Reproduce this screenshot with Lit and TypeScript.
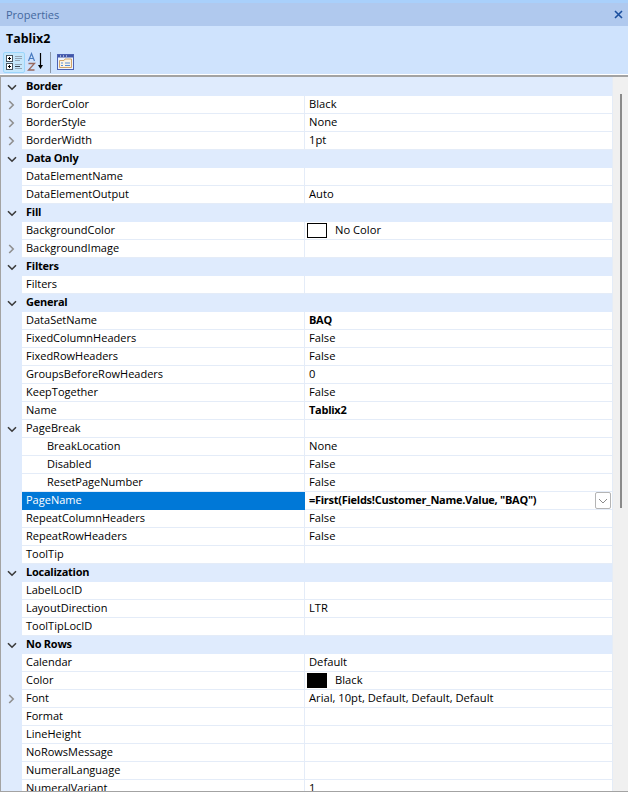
import { LitElement, html, css, svg } from "lit";
import { customElement } from "lit/decorators.js";

type Row = {
  name: string;
  value?: string;
  cat?: boolean;
  bold?: boolean;
  collapsed?: boolean;
  expanded?: boolean;
  sub?: boolean;
  selected?: boolean;
  swatch?: "white" | "black";
};

const ROWS: Row[] = [
  { name: "Border", cat: true },
  { name: "BorderColor", value: "Black", collapsed: true },
  { name: "BorderStyle", value: "None", collapsed: true },
  { name: "BorderWidth", value: "1pt", collapsed: true },
  { name: "Data Only", cat: true },
  { name: "DataElementName" },
  { name: "DataElementOutput", value: "Auto" },
  { name: "Fill", cat: true },
  { name: "BackgroundColor", value: "No Color", swatch: "white" },
  { name: "BackgroundImage", collapsed: true },
  { name: "Filters", cat: true },
  { name: "Filters" },
  { name: "General", cat: true },
  { name: "DataSetName", value: "BAQ", bold: true },
  { name: "FixedColumnHeaders", value: "False" },
  { name: "FixedRowHeaders", value: "False" },
  { name: "GroupsBeforeRowHeaders", value: "0" },
  { name: "KeepTogether", value: "False" },
  { name: "Name", value: "Tablix2", bold: true },
  { name: "PageBreak", expanded: true },
  { name: "BreakLocation", value: "None", sub: true },
  { name: "Disabled", value: "False", sub: true },
  { name: "ResetPageNumber", value: "False", sub: true },
  { name: "PageName", value: '=First(Fields!Customer_Name.Value, "BAQ")', bold: true, selected: true },
  { name: "RepeatColumnHeaders", value: "False" },
  { name: "RepeatRowHeaders", value: "False" },
  { name: "ToolTip" },
  { name: "Localization", cat: true },
  { name: "LabelLocID" },
  { name: "LayoutDirection", value: "LTR" },
  { name: "ToolTipLocID" },
  { name: "No Rows", cat: true },
  { name: "Calendar", value: "Default" },
  { name: "Color", value: "Black", swatch: "black" },
  { name: "Font", value: "Arial, 10pt, Default, Default, Default", collapsed: true },
  { name: "Format" },
  { name: "LineHeight" },
  { name: "NoRowsMessage" },
  { name: "NumeralLanguage" },
  { name: "NumeralVariant", value: "1" },
];

const chevDown = svg`<svg class="chev" width="10" height="7" viewBox="0 0 10 7"><path d="M1 1.2 L5 5.2 L9 1.2" fill="none" stroke="#3a3a3a" stroke-width="1.6"/></svg>`;
const chevRight = svg`<svg class="chev" width="7" height="10" viewBox="0 0 7 10"><path d="M1.2 1 L5.2 5 L1.2 9" fill="none" stroke="#8f8f8f" stroke-width="1.6"/></svg>`;

@customElement("app-root")
export class AppRoot extends LitElement {
  static styles = css`
    :host {
      display: flex;
      flex-direction: column;
      width: 628px;
      height: 792px;
      overflow: hidden;
      background: #cfe3fd;
      font-family: "Open Sans", "Noto Sans", sans-serif;
      font-size: 11px;
      color: #000;
    }
    .strip { height: 3px; background: #a9d0fb; flex: none; }
    .title {
      height: 23px;
      flex: none;
      background: #b0c9ee;
      display: flex;
      align-items: center;
      justify-content: space-between;
      padding: 0 5px 0 6px;
      color: #44689f;
      font-size: 11px;
    }
    .title svg { display: block; }
    .head {
      height: 48px;
      flex: none;
      display: flex;
      flex-direction: column;
    }
    .objname {
      height: 25px;
      padding-left: 6px;
      display: flex;
      align-items: center;
      font-weight: 700;
      font-size: 12.4px;
    }
    .tools {
      display: flex;
      align-items: center;
      height: 22px;
      padding-left: 3px;
    }
    .tool { display: flex; align-items: center; justify-content: center; flex: none; }
    .tool.active {
      width: 22px;
      height: 21px;
      box-sizing: border-box;
      background: #c5e6fb;
      border: 1px solid #9cd6fb;
      border-radius: 2px;
    }
    .tool.az { width: 22px; height: 22px; }
    .tsep { width: 1px; height: 21px; background: #8a97a8; margin: 0 6px 0 3px; flex: none; }
    .white { height: 1px; background: #fff; flex: none; }
    .main {
      height: 714px;
      flex: none;
      display: flex;
      background: #f0f0f0;
      border-top: 2px solid #a3a3a3;
      border-bottom: 2px solid #a3a3a3;
      border-left: 1px solid #a3a3a3;
    }
    .grid {
      width: 611px;
      flex: none;
      overflow: hidden;
      padding-top: 1px;
      background: #dfebfd;
      border-right: 1px solid #e4ecf7;
    }
    .row {
      display: flex;
      height: 18px;
      box-sizing: border-box;
      background: #fff;
      line-height: 15px;
    }
    .gutter {
      width: 21px;
      flex: none;
      background: #dfebfd;
      display: flex;
      align-items: center;
      justify-content: center;
      height: 18px;
    }
    .chev { display: block; }
    .namecell {
      width: 283px;
      flex: none;
      box-sizing: border-box;
      padding-left: 4px;
      border-bottom: 1px solid #e4ecf8;
      border-right: 1px solid #e4ecf8;
      white-space: nowrap;
      overflow: hidden;
    }
    .namecell.sub { padding-left: 25px; }
    .valcell {
      flex: 1;
      min-width: 0;
      box-sizing: border-box;
      padding-left: 4px;
      border-bottom: 1px solid #e4ecf8;
      white-space: nowrap;
      display: flex;
      align-items: flex-start;
      position: relative;
      font-size: 11.2px;
    }
    .val.bold { font-weight: 700; font-size: 11px; letter-spacing: -0.27px; }
    .row.cat { background: #dfebfd; font-weight: 700; }
    .row.cat .namecell { width: auto; flex: 1; border: none; letter-spacing: -0.25px; }
    .row.sel .namecell { background: #0078d7; color: #fff; border-right-color: #0078d7; border-bottom-color: #0078d7; }
    .swatch {
      width: 20px;
      height: 15px;
      box-sizing: border-box;
      border: 1px solid #000;
      margin: 1px 8px 0 -2px;
      flex: none;
    }
    .swatch.black { background: #000; }
    .swatch.white { background: #fff; }
    .drop {
      position: absolute;
      right: 1px;
      top: 0;
      width: 16px;
      height: 17px;
      box-sizing: border-box;
      background: #fff;
      border: 1px solid #b4b4b4;
      border-radius: 2px;
      display: flex;
      align-items: center;
      justify-content: center;
    }
    .scroll { flex: 1; position: relative; background: #f0f0f0; }
    .thumb {
      position: absolute;
      left: 7px;
      top: 17px;
      width: 2px;
      height: 414px;
      background: #8a8a8a;
    }
  `;

  private renderRow(r: Row) {
    if (r.cat) {
      return html`<div class="row cat"><div class="gutter">${chevDown}</div><div class="namecell">${r.name}</div></div>`;
    }
    return html`<div class="row ${r.selected ? "sel" : ""}">
      <div class="gutter">${r.collapsed ? chevRight : r.expanded ? chevDown : ""}</div>
      <div class="namecell ${r.sub ? "sub" : ""}">${r.name}</div>
      <div class="valcell">
        ${r.swatch ? html`<span class="swatch ${r.swatch}"></span>` : ""}
        <span class="val ${r.bold ? "bold" : ""}">${r.value ?? ""}</span>
        ${r.selected
          ? html`<span class="drop"><svg width="10" height="6" viewBox="0 0 10 6"><path d="M1 1 L5 5 L9 1" fill="none" stroke="#8a8a8a" stroke-width="1"/></svg></span>`
          : ""}
      </div>
    </div>`;
  }

  render() {
    return html`
      <div class="strip"></div>
      <div class="title">
        <span>Properties</span>
        <svg width="9" height="9" viewBox="0 0 9 9"><path d="M1 1 L8 8 M8 1 L1 8" stroke="#1b4f9e" stroke-width="1.6" fill="none"/></svg>
      </div>
      <div class="head">
        <div class="objname">Tablix2</div>
        <div class="tools">
          <span class="tool active">
            <svg width="18" height="17" viewBox="0 0 18 17">
              <rect x="1.5" y="1.5" width="6" height="6" fill="#fff" stroke="#4a5560"/>
              <path d="M3 4.5h3M4.5 3v3" stroke="#000"/>
              <rect x="1.5" y="9.5" width="6" height="6" fill="#fff" stroke="#4a5560"/>
              <path d="M3 12.5h3M4.5 11v3" stroke="#000"/>
              <path d="M10 2.5h7M10 4.5h7M10 6.5h5" stroke="#93a3b3"/>
              <path d="M10 10.5h7" stroke="#93a3b3"/>
              <path d="M10 12.5h5" stroke="#3a4450"/>
              <path d="M10 14.5h7" stroke="#93a3b3"/>
            </svg>
          </span>
          <span class="tool az">
            <svg width="20" height="20" viewBox="0 0 20 20">
              <path d="M2.5 9 L5.5 1.5 L8.5 9 M3.6 6.5 H7.4" fill="none" stroke="#4a7cc0" stroke-width="1.2"/>
              <path d="M2.5 11.5 H8.5 L2.5 18 H8.5" fill="none" stroke="#98685e" stroke-width="1.3"/>
              <path d="M14.5 1 V14" stroke="#000" stroke-width="1.2"/>
              <path d="M12 13 L14.5 17 L17 13 Z" fill="#000"/>
            </svg>
          </span>
          <span class="tsep"></span>
          <span class="tool">
            <svg width="17" height="16" viewBox="0 0 17 16">
              <rect x="0.5" y="0.5" width="16" height="15" fill="#eef4fd" stroke="#4c62b4"/>
              <rect x="1" y="1" width="15" height="2.5" fill="#4156a8"/>
              <path d="M3 2h1M6 2h1M9 2h1" stroke="#fff"/>
              <path d="M2.5 6.5 H7 L8 5 H14.5 V13.5 H2.5 Z" fill="#fbf3e2" stroke="#d0a46a"/>
              <path d="M4 9h2M8 9h5M4 11.5h2M8 11.5h5" stroke="#5b8fd6"/>
            </svg>
          </span>
        </div>
      </div>
      <div class="white"></div>
      <div class="main">
        <div class="grid">${ROWS.map((r) => this.renderRow(r))}</div>
        <div class="scroll"><div class="thumb"></div></div>
      </div>
    `;
  }
}
